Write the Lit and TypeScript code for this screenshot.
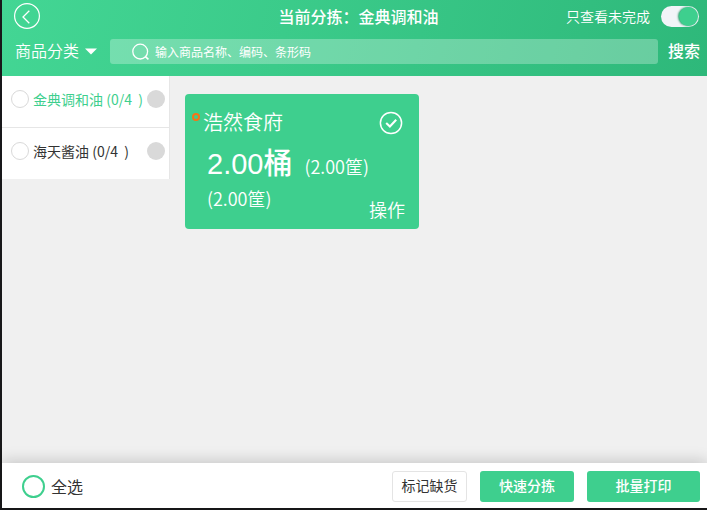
import { LitElement, html, css } from "lit";
import { customElement, state } from "lit/decorators.js";

interface Product {
  id: string;
  name: string;
  done: number;
  total: number;
}

@customElement("app-root")
export class AppRoot extends LitElement {
  static styles = css`
    :host {
      display: flex;
      flex-direction: column;
      min-height: 100vh;
      box-sizing: border-box;
      border-left: 2px solid #18181a;
      border-bottom: 2px solid #18181a;
      background: #f0f0f0;
      color: #333;
      font-family: "Noto Sans CJK SC", sans-serif;
      font-size: 14px;
      line-height: 20px;
    }
    * {
      box-sizing: border-box;
    }
    button,
    input {
      margin: 0;
      padding: 0;
      border: 0;
      background: none;
      color: inherit;
      font: inherit;
      appearance: none;
    }
    button,
    input[type="checkbox"],
    input[type="radio"] {
      cursor: pointer;
    }
    svg {
      display: block;
      flex: none;
    }
    header {
      padding: 1px 7px 12px 11px;
      color: #fff;
      background: linear-gradient(105deg, #43d694 0%, #3bcb8a 40%, #2eb87a 100%);
    }
    .bar {
      display: grid;
      grid-template-columns: 1fr auto 1fr;
      align-items: center;
      height: 30px;
    }
    .back {
      justify-self: start;
    }
    h1 {
      margin: 0 0 0 4px;
      font-size: 16px;
      font-weight: 500;
      line-height: 24px;
    }
    .only {
      justify-self: end;
      display: flex;
      align-items: center;
      gap: 11px;
      font-weight: 350;
    }
    .switch {
      display: flex;
      align-items: center;
      justify-content: flex-end;
      width: 38px;
      height: 21px;
      margin-right: 1px;
      padding: 1px;
      border-radius: 11px;
      background: #f2f4f8;
    }
    .switch::before {
      content: "";
      width: 19px;
      height: 19px;
      border-radius: 50%;
      background: #3ecf8e;
      box-shadow: -1px 0 2px #2a9c6a;
    }
    .switch:not(:checked) {
      justify-content: flex-start;
    }
    .find {
      display: flex;
      align-items: center;
      margin-top: 8px;
      font-size: 16px;
    }
    .category,
    .go {
      padding-bottom: 3px;
    }
    .category {
      display: flex;
      align-items: center;
      gap: 6px;
      margin: 0 13px 0 2px;
      font-weight: 350;
    }
    .category svg {
      margin-top: 2px;
    }
    .field {
      flex: 1;
      display: flex;
      align-items: center;
      gap: 5px;
      min-width: 0;
      height: 25px;
      padding-left: 22px;
      border-radius: 3px;
      background: rgba(255, 255, 255, 0.28);
    }
    .field input {
      flex: 1;
      min-width: 0;
      height: 25px;
      font-size: 12px;
      outline: none;
    }
    .field input::placeholder {
      color: #fff;
      opacity: 1;
    }
    .go {
      margin-left: 10px;
      font-weight: 500;
    }
    main {
      flex: 1;
      display: flex;
      align-items: flex-start;
    }
    .list {
      width: 168px;
      margin: 0;
      padding: 0;
      list-style: none;
      border-right: 1px solid #e6e6e6;
      background: #fff;
    }
    .list li + li {
      border-top: 1px solid #e6e6e6;
    }
    .item {
      display: flex;
      align-items: center;
      height: 51px;
      padding: 0 4px 5px 9px;
      white-space: pre;
      cursor: pointer;
    }
    .item input {
      width: 18px;
      height: 18px;
      margin-right: 4px;
      border: 1px solid #d9d9d9;
      border-radius: 50%;
    }
    .item.active {
      color: #3ecf8e;
    }
    .dot {
      width: 18px;
      height: 18px;
      margin-left: auto;
      border-radius: 50%;
      background: #d9d9d9;
    }
    .card {
      width: 234px;
      margin: 18px 15px;
      padding: 13px 14px 9px 7px;
      border-radius: 4px;
      background: #3ecf8e;
      color: #fff;
      font-size: 18px;
      font-weight: 350;
    }
    .head {
      display: flex;
      align-items: center;
      gap: 3px;
    }
    .ring {
      width: 8px;
      height: 8px;
      margin-bottom: 10px;
      border: 2px solid #f97316;
      border-radius: 50%;
    }
    h2 {
      flex: 1;
      margin: 0;
      font-size: 20px;
      font-weight: 350;
      line-height: 30px;
    }
    p {
      margin: 0;
      line-height: 24px;
    }
    .main {
      margin: 7px 0 0 15px;
      line-height: 40px;
    }
    .main strong {
      margin-right: 12px;
      font-family: "Liberation Sans", "Noto Sans CJK SC", sans-serif;
      font-size: 29px;
      font-weight: 500;
    }
    .extra {
      display: flex;
      justify-content: space-between;
      padding-left: 15px;
    }
    .operate {
      margin-top: 12px;
      line-height: 22px;
    }
    footer {
      display: flex;
      align-items: center;
      gap: 13px;
      height: 45px;
      padding: 1px 7px 0 20px;
      background: #fff;
      box-shadow: 0 -2px 14px rgba(0, 0, 0, 0.18);
    }
    .all {
      display: flex;
      align-items: center;
      gap: 6px;
      margin-right: auto;
      font-size: 16px;
      cursor: pointer;
    }
    .all input {
      width: 23px;
      height: 23px;
      border: 2px solid #3ecf8e;
      border-radius: 50%;
    }
    .btn {
      height: 31px;
      padding-bottom: 2px;
      border-radius: 3px;
      background: #3ecf8e;
      color: #fff;
      font-weight: 500;
    }
    .mark {
      width: 75px;
      border: 1px solid #e4e4e4;
      background: #fff;
      color: #333;
      font-weight: 400;
    }
    .quick {
      width: 94px;
    }
    .print {
      width: 113px;
    }
  `;

  @state() private products: Product[] = [
    { id: "oil", name: "金典调和油", done: 0, total: 4 },
    { id: "sauce", name: "海天酱油", done: 0, total: 4 },
  ];

  @state() private current = "oil";

  render() {
    return html`
      <header>
        <div class="bar">
          <button class="back" aria-label="返回">
            <svg width="28" height="28" viewBox="0 0 28 28" fill="none" stroke="#fff">
              <circle cx="14" cy="14" r="12.4" stroke-width="1.2" />
              <path d="M16.3 8.8 10 15l6.3 6.2" stroke-width="1.3" />
            </svg>
          </button>
          <h1>当前分拣：金典调和油</h1>
          <label class="only">
            只查看未完成
            <input class="switch" type="checkbox" role="switch" checked />
          </label>
        </div>
        <div class="find">
          <button class="category" aria-haspopup="true">
            商品分类
            <svg width="12" height="7" viewBox="0 0 12 7"><path d="M0 .5h12L6 6.5z" fill="#fff" /></svg>
          </button>
          <label class="field" aria-label="搜索商品">
            <svg width="18" height="18" viewBox="0 0 18 18" fill="none" stroke="#fff" stroke-width="1.3">
              <circle cx="8.2" cy="8.6" r="7.4" />
              <path d="m13.4 13.6 3 2.8" stroke-width="1.6" />
            </svg>
            <input type="text" placeholder="输入商品名称、编码、条形码" />
          </label>
          <button class="go">搜索</button>
        </div>
      </header>
      <main>
        <ul class="list">
          ${this.products.map(
            (p) => html`<li>
              <label class="item ${p.id === this.current ? "active" : ""}"
                ><input type="radio" name="product" @change=${() => (this.current = p.id)} />${p.name} (${p.done}/${p.total}  )<span
                  class="dot"
                ></span
              ></label>
            </li>`
          )}
        </ul>
        <article class="card">
          <div class="head">
            <span class="ring"></span>
            <h2>浩然食府</h2>
            <svg width="28" height="28" viewBox="0 0 28 28" fill="none" stroke="#fff">
              <circle cx="14" cy="15" r="10.6" stroke-width="1.5" />
              <path d="m9.2 14.9 3.7 3.5 6.3-6.6" stroke-width="2.1" />
            </svg>
          </div>
          <p class="main"><strong>2.00桶</strong>(2.00筐)</p>
          <div class="extra">
            <p>(2.00筐)</p>
            <button class="operate">操作</button>
          </div>
        </article>
      </main>
      <footer>
        <label class="all"><input type="checkbox" />全选</label>
        <button class="btn mark">标记缺货</button>
        <button class="btn quick">快速分拣</button>
        <button class="btn print">批量打印</button>
      </footer>
    `;
  }
}
